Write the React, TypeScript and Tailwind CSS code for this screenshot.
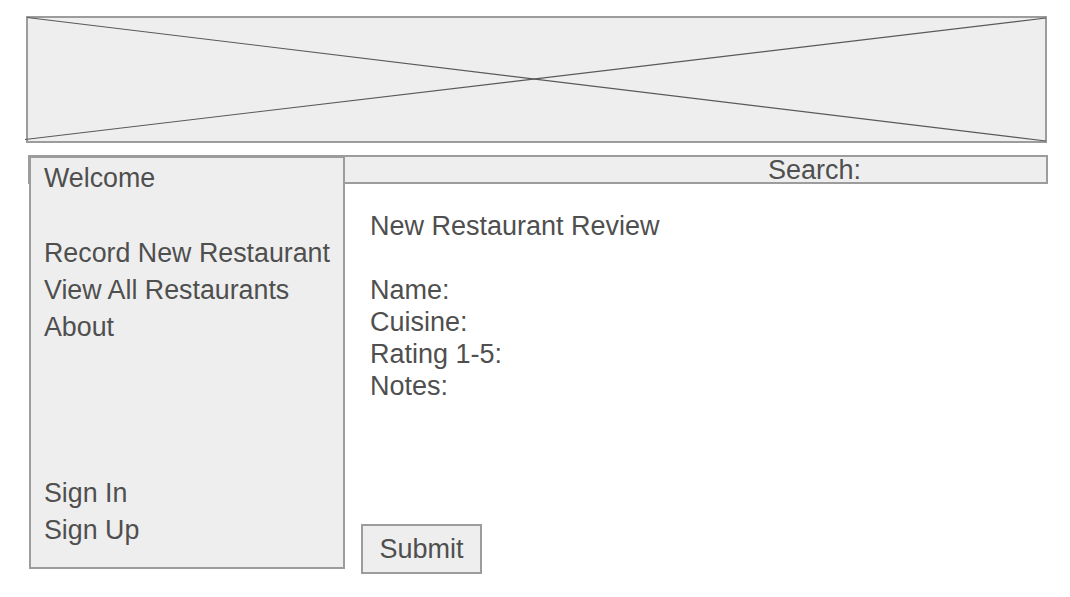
export default function App() {
  return (
    <div className="h-[597px] w-[1070px] bg-white pt-[16px] font-['Liberation_Sans',Arial,sans-serif] text-[27px] text-[#4f4f4f]">
      {/* banner placeholder */}
      <div className="relative ml-[26px] h-[127px] w-[1021px] border-2 border-[#9c9c9c] bg-[#eeeeee]">
        <svg
          className="absolute -left-[2px] -top-[2px] overflow-visible"
          width="1021"
          height="127"
          viewBox="0 0 1021 127"
        >
          <line x1="1" y1="1.5" x2="1020" y2="125" stroke="#595959" strokeWidth="1.2" />
          <line x1="-1" y1="123.5" x2="1020" y2="2" stroke="#595959" strokeWidth="1.2" />
        </svg>
      </div>

      <div className="ml-[28px] mt-[12px] grid w-[1020px] grid-cols-[317px_1fr] grid-rows-[29px_auto]">
        <div className="col-span-2 col-start-1 row-start-1 flex h-[29px] items-center justify-end border-2 border-[#9c9c9c] bg-[#eeeeee] pr-[185px] pt-[1px] leading-[25px]">
          Search:
        </div>

        <nav className="relative z-10 col-start-1 row-span-2 row-start-1 ml-[1px] mt-[1px] flex h-[413px] w-[316px] flex-col border-2 border-[#9c9c9c] bg-[#eeeeee] pl-[13px] pt-[2px] text-[26.8px] leading-[37px]">
          <span>Welcome</span>
          <span className="mt-[38px]">Record New Restaurant</span>
          <span>View All Restaurants</span>
          <span>About</span>
          <span className="mt-[129px]">Sign In</span>
          <span>Sign Up</span>
        </nav>

        <div className="col-start-2 row-start-2 flex flex-col pl-[16px] pt-[26px] leading-[32px]">
          <div className="flex flex-col pl-[9px]">
            <span>New Restaurant Review</span>
            <span className="mt-[32px]">Name:</span>
            <span>Cuisine:</span>
            <span>Rating 1-5:</span>
            <span>Notes:</span>
          </div>
          <button className="mt-[122px] flex h-[50px] w-[121px] items-center justify-center border-2 border-[#9c9c9c] bg-[#eeeeee]">
            Submit
          </button>
        </div>
      </div>
    </div>
  );
}
